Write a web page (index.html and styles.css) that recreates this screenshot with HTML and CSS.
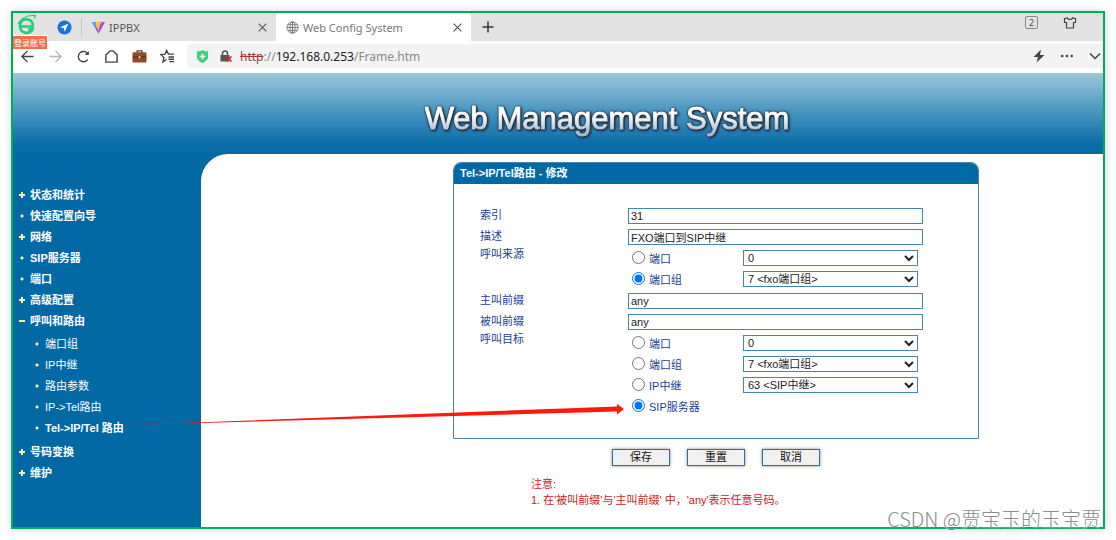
FILE: index.html
```html
<!DOCTYPE html>
<html lang="zh-CN">
<head>
<meta charset="utf-8">
<meta name="viewport" content="width=device-width, initial-scale=1">
<title>Web Config System</title>
<link rel="stylesheet" href="styles.css">
</head>
<body>
<div class="window">
  <div class="tabstrip">
    <div class="launchers">
      <div class="account">
        <svg class="logo" viewBox="0 0 20 20"><path d="M3.200 11.500h12.600c.5-4.600-2.600-7.200-6.300-7.200-4 0-6.600 3-6.600 6.800 0 4 2.900 6.700 6.700 6.700 2.700 0 4.900-1.200 5.900-3.500h-4.200" fill="none" stroke="#22d07a" stroke-width="2.700"/><path d="M1 9C4 3 11 0 18.500.5L17 3.500" fill="none" stroke="#22d07a" stroke-width="1.300"/></svg>
        <span class="account-tip">登录账号</span>
      </div>
      <svg class="nav-badge" viewBox="0 0 16 16"><circle cx="8" cy="8" r="7.500" fill="#1673e0"/><path d="M12.200 3.800 3.500 7.800l3.800.9.900 3.800z" fill="#fff"/></svg>
    </div>
    <div class="tab">
      <svg class="tab-icon" viewBox="0 0 16 16"><path d="M1 2h4l3 5.500L8 15z" fill="#8a5cf0"/><path d="M15 2h-4L8 7.500V15z" fill="#b04be8"/><path d="M1 2h4l1.500 3-3 1.800z" fill="#48a9f5"/><path d="m5.500 1.500 5-.5L8 11 5.500 7z" fill="#ffc92e"/></svg>
      <span class="tab-title">IPPBX</span>
      <button class="tab-close" aria-label="Close tab"><svg viewBox="0 0 10 10"><path d="m1.500 1.500 7 7m0-7-7 7"/></svg></button>
    </div>
    <div class="tab active">
      <svg class="tab-icon globe" viewBox="0 0 16 16"><circle cx="8" cy="8" r="6"/><ellipse cx="8" cy="8" rx="2.800" ry="6"/><path d="M2 8h12M3 5h10M3 11h10M8 2v12"/></svg>
      <span class="tab-title">Web Config System</span>
      <button class="tab-close" aria-label="Close tab"><svg viewBox="0 0 10 10"><path d="m1.500 1.500 7 7m0-7-7 7"/></svg></button>
    </div>
    <button class="new-tab" aria-label="New tab"><svg viewBox="0 0 12 12"><path d="M6 .5v11M.5 6h11"/></svg></button>
    <div class="strip-actions">
      <span class="count">2</span>
      <svg class="shirt" viewBox="0 0 14 14"><path d="M4.500 2 1.500 2.500v4h2V12h7V6.500h2v-4L9.500 2C9 4 5 4 4.500 2z"/></svg>
    </div>
  </div>

  <div class="toolbar">
    <div class="nav-buttons">
      <button aria-label="Back"><svg viewBox="0 0 16 16"><path d="M14.500 8H2.500M8 2 2 8l6 6"/></svg></button>
      <button class="dim" aria-label="Forward"><svg viewBox="0 0 16 16"><path d="M1.500 8h12M8 2l6 6-6 6"/></svg></button>
      <button aria-label="Reload"><svg viewBox="0 0 16 16"><path d="M12.500 11.300A5.500 5.500 0 1 1 12.500 5"/><path d="M13.700 2v4.500H9.200z" fill="#444" stroke="none"/></svg></button>
      <button aria-label="Home"><svg viewBox="0 0 16 16"><path d="M2 6.300 6.500 2h3L14 6.300V14H2z"/></svg></button>
      <button aria-label="Work"><svg viewBox="0 0 16 16"><path d="M5.500 4V2h5v2" stroke="#6d3a25"/><rect x=".5" y="3.500" width="15" height="11" rx="1.500" fill="#8d4a2d" stroke="none"/><path d="M1 8.500h14" stroke="#4d2516" stroke-width="1"/><rect x="7" y="7.500" width="2" height="2.500" fill="#f2c16b" stroke="none"/></svg></button>
      <button aria-label="Bookmarks"><svg viewBox="0 0 16 16"><path d="M7 11.200 3.200 13.700l1-4.500L1 6l4.300-.5L7 1.500l2 4h6M9 8.500h6M9 11h6M10 13.500h5"/></svg></button>
    </div>
    <div class="address">
      <svg class="shield" viewBox="0 0 14 16"><path d="M7 1c2 1.300 4 1.500 6 1.500v6c0 3-3 5-6 6.500-3-1.500-6-3.500-6-6.500v-6C3 2.500 5 2.300 7 1z" fill="#3fd07c"/><path d="M7 5v6M4 8h6" stroke="#fff" stroke-width="1.600"/></svg>
      <svg class="lock" viewBox="0 0 14 14"><path d="M3.500 7V4.500a2.500 2.500 0 0 1 5 0V7" fill="none" stroke="#555" stroke-width="1.500"/><rect x="1.500" y="6" width="9" height="6.500" fill="#555"/><path d="m7.500 7.500 5 5m0-5-5 5" stroke="#d7262e" stroke-width="1.700"/></svg>
      <span class="url"><s>http</s>://<span class="host">192.168.0.253</span>/Frame.htm</span>
      <div class="address-actions">
        <svg viewBox="0 0 14 14"><path d="M9 .5 1.500 8H6l-1.500 5.500L12.500 6H8z" fill="#444"/></svg>
        <svg viewBox="0 0 14 14" fill="#444"><circle cx="2.200" cy="7" r="1.300"/><circle cx="7" cy="7" r="1.300"/><circle cx="11.800" cy="7" r="1.300"/></svg>
        <svg viewBox="0 0 14 14"><path d="m2 4.500 5 5 5-5" fill="none" stroke="#444" stroke-width="1.500"/></svg>
      </div>
    </div>
  </div>

  <header class="banner"><h1>Web Management System</h1></header>

  <div class="page">
    <nav class="sidebar">
      <ul class="menu">
        <li class="plus"><a href="#">状态和统计</a></li>
        <li class="dot"><a href="#">快速配置向导</a></li>
        <li class="plus"><a href="#">网络</a></li>
        <li class="dot"><a href="#">SIP服务器</a></li>
        <li class="dot"><a href="#">端口</a></li>
        <li class="plus"><a href="#">高级配置</a></li>
        <li class="minus"><a href="#">呼叫和路由</a>
          <ul class="submenu">
            <li class="dot"><a href="#">端口组</a></li>
            <li class="dot"><a href="#">IP中继</a></li>
            <li class="dot"><a href="#">路由参数</a></li>
            <li class="dot"><a href="#">IP-&gt;Tel路由</a></li>
            <li class="dot"><a href="#" class="current">Tel-&gt;IP/Tel 路由</a></li>
          </ul>
        </li>
        <li class="plus"><a href="#">号码变换</a></li>
        <li class="plus"><a href="#">维护</a></li>
      </ul>
    </nav>

    <main class="content">
      <form class="editor">
        <section class="panel">
          <h2>Tel-&gt;IP/Tel路由 - 修改</h2>
          <div class="fields">
            <label class="name" for="index">索引</label>
            <input class="text" id="index" type="text" value="31">
            <label class="name" for="desc">描述</label>
            <input class="text" id="desc" type="text" value="FXO端口到SIP中继">
            <span class="name top" id="source-label">呼叫来源</span>
            <div class="choices" role="radiogroup" aria-labelledby="source-label">
              <label><input type="radio" name="source"><span>端口</span></label>
              <select aria-label="来源端口"><option>0</option></select>
              <label><input type="radio" name="source" checked><span>端口组</span></label>
              <select aria-label="来源端口组"><option>7 &lt;fxo端口组&gt;</option></select>
            </div>
            <label class="name" for="caller">主叫前缀</label>
            <input class="text" id="caller" type="text" value="any">
            <label class="name" for="callee">被叫前缀</label>
            <input class="text" id="callee" type="text" value="any">
            <span class="name top" id="target-label">呼叫目标</span>
            <div class="choices" role="radiogroup" aria-labelledby="target-label">
              <label><input type="radio" name="target"><span>端口</span></label>
              <select aria-label="目标端口"><option>0</option></select>
              <label><input type="radio" name="target"><span>端口组</span></label>
              <select aria-label="目标端口组"><option>7 &lt;fxo端口组&gt;</option></select>
              <label><input type="radio" name="target"><span>IP中继</span></label>
              <select aria-label="目标IP中继"><option>63 &lt;SIP中继&gt;</option></select>
              <label><input type="radio" name="target" checked><span>SIP服务器</span></label>
            </div>
          </div>
        </section>
        <div class="actions">
          <button type="button">保存</button>
          <button type="button">重置</button>
          <button type="button">取消</button>
        </div>
        <div class="note">
          <p>注意:</p>
          <p>1. 在'被叫前缀'与'主叫前缀' 中，'any'表示任意号码。</p>
        </div>
      </form>
    </main>
  </div>

  <svg class="pointer" viewBox="0 0 502 34"><path d="M4 28 494 9.500v-2.500l7 5-7 5.500v-3z" fill="#fb1a0c"/></svg>
  <div class="watermark">CSDN @贾宝玉的玉宝贾</div>
</div>
</body>
</html>
```

FILE: styles.css
```css
* { box-sizing: border-box; }

body {
  margin: 0;
  padding: 11px;
  background: #fff;
  font: 11px/21px "Liberation Sans", "Noto Sans CJK SC", sans-serif;
}

button, input, select { font: inherit; margin: 0; }
button { padding: 0; border: 0; background: none; }
ul { list-style: none; margin: 0; padding: 0; }
a { color: inherit; text-decoration: none; }
svg { display: block; flex: none; }

.window {
  position: relative;
  display: flex;
  flex-direction: column;
  min-height: calc(100vh - 22px);
  border: 2px solid #00b050;
  box-shadow: 0 0 8px #c9d6ee;
}

/* Browser tabs */
.tabstrip {
  display: flex;
  height: 28px;
  background: #e2e2e2;
  font-family: "Noto Sans", sans-serif;
}
.launchers {
  display: flex;
  align-items: center;
  gap: 20px;
  width: 69px;
  margin: 5px 0;
  padding-left: 4px;
  border-right: 1px solid #c4c4c4;
}
.account { position: relative; }
.logo { width: 20px; height: 20px; margin-top: -4px; }
.account-tip {
  position: absolute;
  z-index: 1;
  top: 16px;
  left: -4px;
  height: 15px;
  padding: 0 1px;
  border: 1px solid #fff;
  border-left: 0;
  background: #f56c4a;
  color: #fff;
  font: 8px/13px "Noto Sans CJK SC", sans-serif;
  white-space: nowrap;
}
.nav-badge { width: 15px; height: 15px; }
.tab {
  display: flex;
  align-items: center;
  gap: 3px;
  width: 194px;
  padding: 0 8px 0 9px;
  color: #555;
}
.tab.active {
  width: 195px;
  background: #fff;
  color: #777;
  border-radius: 3px 3px 0 0;
}
.tab-icon { width: 15px; height: 15px; }
.globe { fill: none; stroke: #777; }
.tab-title { flex: 1; }
.tab-close svg { width: 11px; height: 11px; fill: none; stroke: #555; }
.new-tab { margin-left: 11px; }
.new-tab svg { width: 12px; height: 12px; fill: none; stroke: #333; stroke-width: 1.5; }
.strip-actions {
  display: flex;
  gap: 25px;
  margin: 3px 26px 0 auto;
}
.count {
  width: 13px;
  height: 13px;
  border: 1px solid #888;
  border-radius: 2px;
  color: #555;
  font-size: 9px;
  line-height: 11px;
  text-align: center;
}
.shirt { width: 14px; height: 14px; fill: none; stroke: #444; stroke-width: 1.2; }

/* Address row */
.toolbar {
  display: flex;
  height: 32px;
  padding: 3px 0 5px;
  background: #fff;
}
.nav-buttons {
  display: flex;
  align-items: center;
  gap: 13px;
  width: 174px;
  padding-left: 7px;
}
.nav-buttons svg { width: 15px; height: 15px; fill: none; stroke: #444; stroke-width: 1.5; }
.nav-buttons .dim svg { stroke: #b5b5b5; }
.address {
  flex: 1;
  display: flex;
  align-items: center;
  padding: 0 1px 0 9px;
  background: #f3f3f3;
  border-radius: 3px 0 0 3px;
}
.shield { width: 13px; height: 15px; }
.lock { width: 14px; height: 14px; margin: 0 7px 0 10px; }
.url {
  flex: 1;
  color: #888;
  font: 12px/21px "Noto Sans", sans-serif;
}
.url s { color: #a03a32; }
.host { color: #222; }
.address-actions { display: flex; gap: 14px; }
.address-actions svg { width: 14px; height: 14px; }

/* Site banner */
.banner {
  display: flex;
  justify-content: center;
  align-items: center;
  height: 81px;
  padding: 10px 0 0 98px;
  background: linear-gradient(#9fc6da, #4c98c1 45%, #0a6ca8 88%, #0369a5);
}
.banner h1 {
  margin: 0;
  background: linear-gradient(#fff 40%, #a9bfd8 85%);
  background-clip: text;
  -webkit-background-clip: text;
  color: transparent;
  -webkit-text-stroke: 1px transparent;
  font-size: 31px;
  font-weight: normal;
  line-height: 36px;
  filter: drop-shadow(0 0 1px #223) drop-shadow(1px 1px 1px #222);
}

/* Page body */
.page {
  flex: 1;
  display: flex;
  background: #0369a5;
}
.sidebar {
  width: 188px;
  padding-top: 31px;
  color: #fff;
  font-weight: bold;
}
.menu li { position: relative; padding-left: 17px; }
.menu a { display: block; height: 21px; white-space: nowrap; }
.submenu { margin: 2px 0 3px; font-weight: normal; }
.submenu li { padding-left: 15px; }
.submenu .current { font-weight: bold; }
.menu li::before {
  content: "";
  position: absolute;
  top: 7px;
  left: 6px;
  width: 6px;
  height: 6px;
  --mark: #f2f7a0;
}
.submenu li::before { left: 4px; }
.plus::before {
  background:
    linear-gradient(var(--mark), var(--mark)) center / 6px 2px no-repeat,
    linear-gradient(var(--mark), var(--mark)) center / 2px 6px no-repeat;
}
.minus::before { background: linear-gradient(var(--mark), var(--mark)) center / 6px 2px no-repeat; }
.dot::before { background: radial-gradient(circle, var(--mark) 1px, transparent 2px); }

.content {
  flex: 1;
  display: flex;
  justify-content: center;
  align-items: flex-start;
  padding: 8px 0 8px 128px;
  border-radius: 27px 0 0 0;
  background: #fff;
}
.editor { width: 526px; }
.panel {
  border: 1px solid #4586ab;
  border-radius: 8px 8px 0 0;
  overflow: hidden;
}
.panel h2 {
  margin: 0;
  padding-left: 6px;
  background: #0369a5;
  color: #fff;
  font-size: 11px;
  line-height: 21px;
}
.fields {
  display: grid;
  grid-template-columns: 148px 1fr;
  align-items: center;
  padding: 21px 55px 21px 26px;
  color: #1c3f8c;
}
.name.top { align-self: start; line-height: 15px; }
.text {
  width: 100%;
  height: 16px;
  margin: 3px 0 2px;
  padding: 0 2px;
  border: 1px solid #4586ab;
  background: #fff;
  color: #222;
  line-height: 14px;
}
.choices {
  display: grid;
  grid-template-columns: 115px 175px;
  grid-auto-rows: 21px;
  align-items: center;
  padding-bottom: 1px;
}
.choices label {
  display: flex;
  align-items: center;
  gap: 4px;
  padding-left: 4px;
}
.choices label span { padding-top: 4px; line-height: 17px; }
.choices input { width: 13px; height: 13px; }
.choices select {
  width: 100%;
  height: 16px;
  padding: 0;
  border: 1px solid #4586ab;
  border-radius: 0;
  background: #fff;
  color: #222;
  line-height: 14px;
}

.actions {
  display: flex;
  justify-content: center;
  gap: 17px;
  padding: 10px 0;
}
.actions button {
  width: 58px;
  height: 17px;
  border: 1px solid #2f7198;
  background: #f0f0f0;
  box-shadow: 0 0 3px #888;
  color: #111;
  line-height: 15px;
}
.note {
  padding-left: 78px;
  color: #d01818;
  line-height: 16px;
}
.note p { margin: 0; }

/* Annotation and credit over the page */
.pointer {
  position: absolute;
  top: 384px;
  left: 110px;
  width: 502px;
  height: 34px;
}
.watermark {
  position: absolute;
  right: 2px;
  bottom: -4px;
  color: #8c8c8c;
  font: 300 20px/24px "Noto Sans CJK SC", sans-serif;
  text-shadow: 0 0 1px #fff;
}
```
